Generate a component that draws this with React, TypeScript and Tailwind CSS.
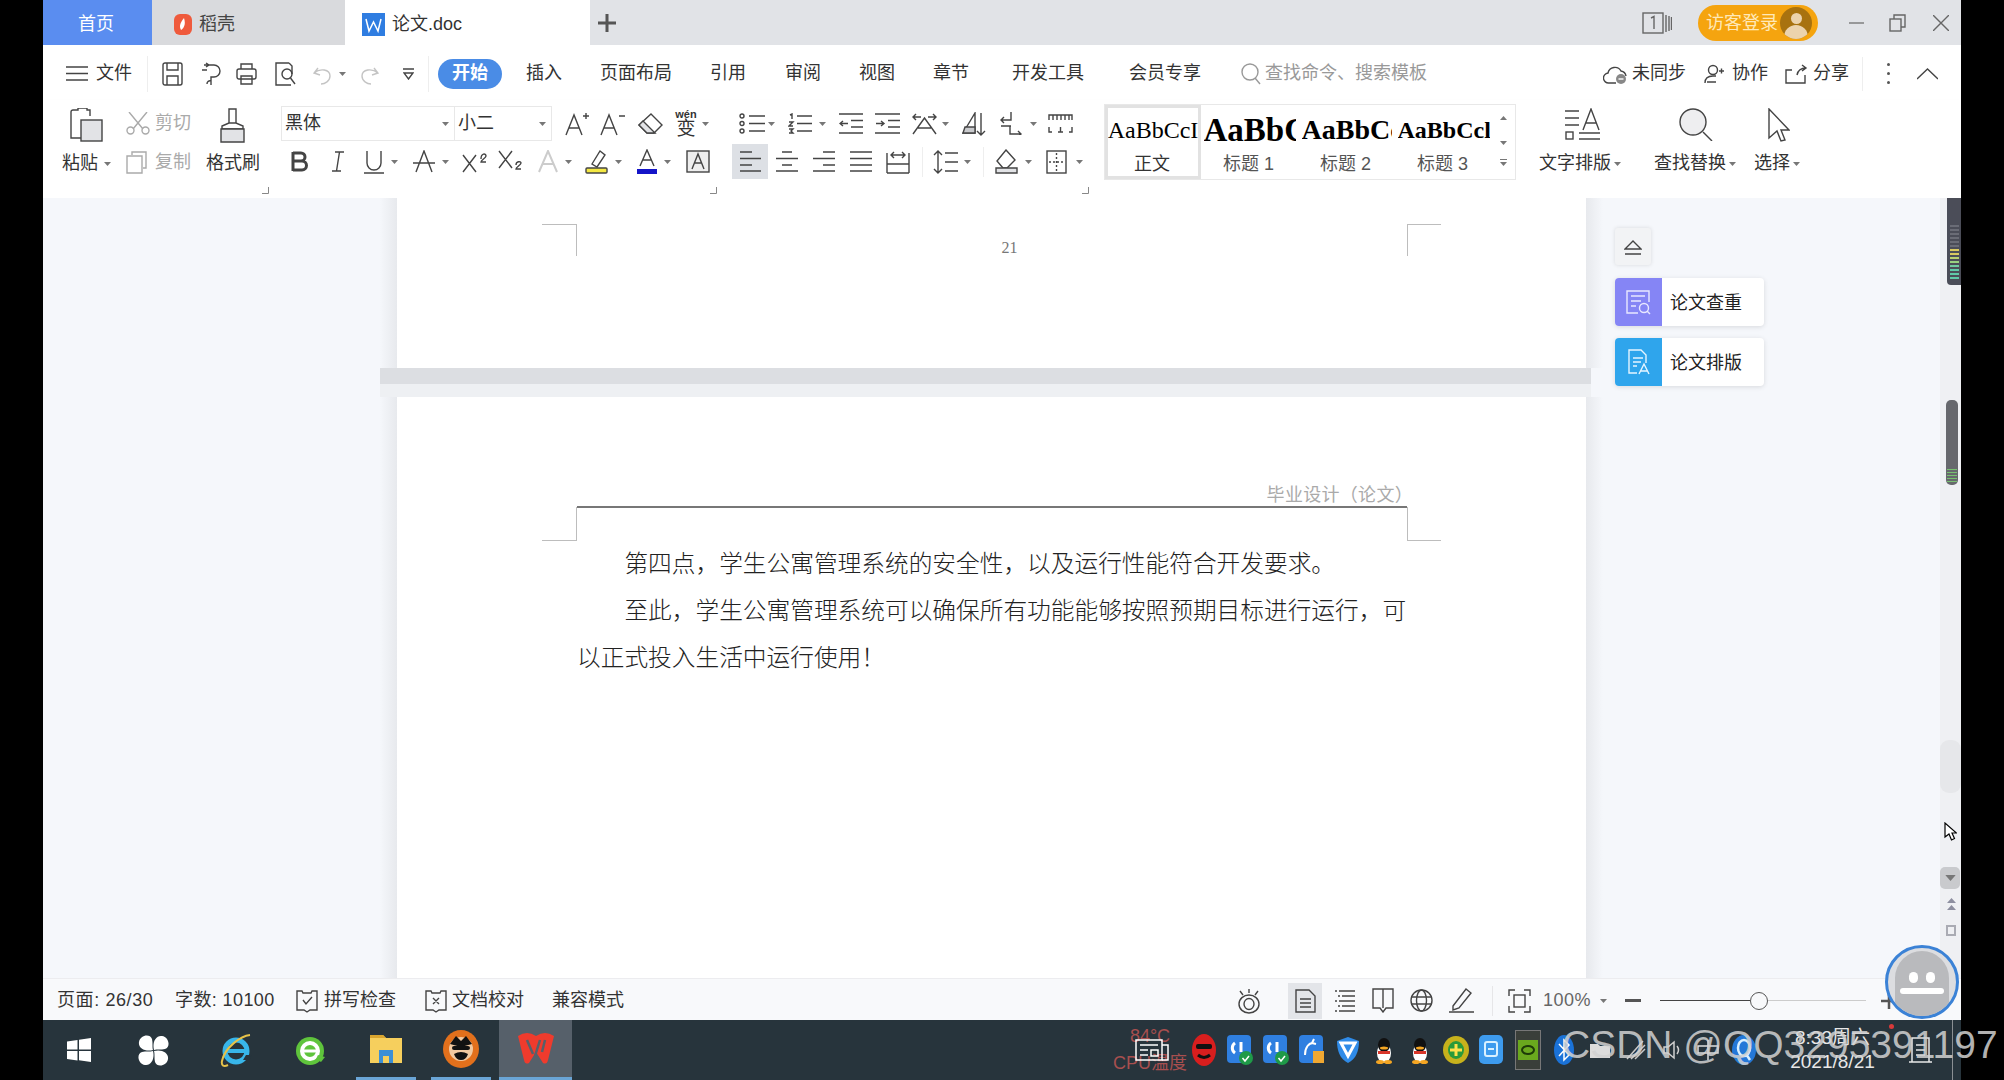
import type { ReactNode } from "react";

type IconProps = { w: number; h: number; className?: string; children: ReactNode; sw?: number };

const S = ({ w, h, className = "", children, sw = 1.4 }: IconProps) => (
  <svg
    width={w}
    height={h}
    viewBox={`0 0 ${w} ${h}`}
    fill="none"
    stroke="currentColor"
    strokeWidth={sw}
    className={`shrink-0 text-[#444] ${className}`}
  >
    {children}
  </svg>
);

const Caret = ({ className = "" }: { className?: string }) => (
  <svg width="7" height="4" viewBox="0 0 7 4" className={`shrink-0 ${className}`}>
    <path d="M0 0h7L3.5 4z" fill="#777" />
  </svg>
);

const Launcher = ({ className = "" }: { className?: string }) => (
  <svg width="7" height="7" viewBox="0 0 7 7" fill="none" stroke="#888" className={`block ${className}`}>
    <path d="M6.5 0v6.5H0" />
  </svg>
);

const tabs = [
  { label: "插入", w: "w-[82px]" },
  { label: "页面布局", w: "w-[102px]" },
  { label: "引用", w: "w-[82px]" },
  { label: "审阅", w: "w-[68px]" },
  { label: "视图", w: "w-[80px]" },
  { label: "章节", w: "w-[68px]" },
  { label: "开发工具", w: "w-[126px]" },
  { label: "会员专享", w: "w-[108px]" },
];

const TabBar = () => (
  <div className="flex h-[45px] items-center bg-[#e1e3e7] text-[18px]">
    <div className="flex h-full w-[109px] items-center justify-center bg-[#5a8df0] pt-[3px] pr-[3px] text-white">首页</div>
    <div className="flex h-full w-[193px] items-center bg-[#d9dadd] pl-[22px] pt-[3px] text-[#444]">
      <svg width="18" height="21" viewBox="0 0 18 21">
        <rect width="18" height="21" rx="6" fill="#ef5a3c" />
        <path d="M10 4C6 9 5 12 7 16c3-2 5-6 3-12z" fill="#fff" />
      </svg>
      <span className="ml-[7px]">稻壳</span>
    </div>
    <div className="flex h-full w-[245px] items-center bg-white pl-[17px] pt-[3px] text-[#333]">
      <svg width="23" height="23" viewBox="0 0 23 23">
        <rect width="23" height="23" fill="#2f7de1" />
        <path d="M4 6l3 12 4.500-9 4.500 9 3-12" fill="none" stroke="#fff" strokeWidth="1.500" />
      </svg>
      <span className="ml-[7px]">论文.doc</span>
    </div>
    <S w={18} h={18} sw={3} className="ml-[8px] text-[#555]">
      <path d="M9 0v18M0 9h18" />
    </S>
    <S w={30} h={22} className="ml-auto text-[#666]">
      <rect x="1" y="1" width="20" height="20" />
      <path d="M24 3v17M27 4v15M29.500 5v13" />
      <path d="M9 6l3-1.500V17" />
    </S>
    <div className="ml-[26px] flex h-[36px] w-[120px] items-center rounded-full bg-[#f5a40f] pl-[8px] text-[18px] text-[#ffe9b8]">
      <span className="pt-[2px]">访客登录</span>
      <div className="ml-[2px] flex h-[32px] w-[32px] flex-col items-center overflow-hidden rounded-full bg-[#a8720f]">
        <div className="mt-[6px] h-[11px] w-[11px] rounded-full bg-[#ecd3ad]" />
        <div className="mt-[1px] h-[14px] w-[24px] rounded-t-full bg-[#ecd3ad]" />
      </div>
    </div>
    <S w={15} h={2} className="ml-[31px] text-[#777]">
      <path d="M0 1h15" />
    </S>
    <S w={17} h={18} className="ml-[25px] text-[#666]">
      <rect x="1" y="5" width="11" height="12" />
      <path d="M5 5V1h11v12h-4" />
    </S>
    <S w={16} h={16} className="ml-[27px] mr-[12px] text-[#666]">
      <path d="M0 0l16 16M16 0L0 16" />
    </S>
  </div>
);

const MenuRow = () => (
  <div className="flex h-[55px] items-center bg-white pt-[2px] text-[18px] text-[#333]">
    <S w={22} h={15} className="ml-[23px]">
      <path d="M0 1h22M0 7.500h22M0 14h22" />
    </S>
    <span className="ml-[8px]">文件</span>
    <div className="ml-[15px] h-[36px] w-px bg-[#eeeeee]" />
    <S w={21} h={24} className="ml-[14px]">
      <path d="M1 3a2 2 0 012-2h15a2 2 0 012 2v18a2 2 0 01-2 2H3a2 2 0 01-2-2z" />
      <path d="M5 1v7h11V1M5 23v-9h11v9" />
    </S>
    <S w={21} h={24} className="ml-[17px]">
      <path d="M8 3h6a6 6 0 010 12h-3v8M4 3h5M6 1l3 2-3 2M2 8h5M11 19a3 3 0 00-4 3" />
    </S>
    <S w={21} h={24} className="ml-[15px]">
      <rect x="1" y="7" width="19" height="10" rx="2" />
      <path d="M5 7V2h11v5M5 14h11v8H5z" />
    </S>
    <S w={22} h={24} className="ml-[17px]">
      <path d="M15 1H2v22h15M15 1l3 3v8" />
      <circle cx="13" cy="12" r="5" />
      <path d="M16.500 16l4.500 6" />
    </S>
    <S w={19} h={22} className="ml-[17px] text-[#c4c4c4]">
      <path d="M5 5L1 10l6 2M1 10c6-5 16-4 16 3 0 5-5 8-9 8" />
    </S>
    <Caret className="ml-[7px]" />
    <S w={18} h={22} className="ml-[15px] text-[#c4c4c4]">
      <path d="M13 5l4 5-6 2M17 10C11 5 1 6 1 13c0 5 5 8 9 8" />
    </S>
    <S w={11} h={12} className="ml-[24px]">
      <path d="M0 1h11M1 5h9L5.500 11z" />
    </S>
    <div className="ml-[14px] h-[36px] w-px bg-[#eeeeee]" />
    <div className="ml-[9px] flex h-[30px] w-[64px] items-center justify-center rounded-full bg-[#4a8ce6] font-bold text-white">
      开始
    </div>
    {tabs.map((t) => (
      <div key={t.label} className={`${t.w} pl-[2px] text-center`}>
        {t.label}
      </div>
    ))}
    <S w={20} h={22} className="ml-[23px] text-[#999]">
      <circle cx="9" cy="9" r="8" />
      <path d="M14 15l5 6" />
    </S>
    <span className="ml-[4px] text-[#999]">查找命令、搜索模板</span>
    <S w={24} h={22} className="ml-[176px]">
      <path d="M13 20H6a5 5 0 01-1-10 7 7 0 0113-2 6 6 0 015 5" />
      <circle cx="18" cy="16" r="5" fill="#888" stroke="none" />
      <path d="M15.500 16h5" stroke="#fff" />
    </S>
    <span className="ml-[5px]">未同步</span>
    <S w={20} h={20} className="ml-[18px]">
      <circle cx="9" cy="6" r="4.500" />
      <path d="M1 19c0-5 3-7 8-7h3M12 18H3M15 7h5M17.500 4.500v5" />
    </S>
    <span className="ml-[8px]">协作</span>
    <S w={25} h={20} className="ml-[16px]">
      <path d="M8 6H2v13h19v-8M13 11c1-5 4-7 9-7M18 1l4 3-4 3" />
    </S>
    <span className="ml-[4px]">分享</span>
    <div className="ml-[13px] h-[34px] w-px bg-[#eeeeee]" />
    <div className="ml-[24px] flex w-[3px] flex-col gap-[6px]">
      <div className="h-[3px] w-[3px] rounded-full bg-[#555]" />
      <div className="h-[3px] w-[3px] rounded-full bg-[#555]" />
      <div className="h-[3px] w-[3px] rounded-full bg-[#555]" />
    </div>
    <S w={21} h={12} className="ml-[27px]">
      <path d="M0 11L10.500 1 21 11" />
    </S>
  </div>
);

const Ribbon = () => (
  <div className="flex h-[98px] items-start bg-white pt-[4px] text-[18px] text-[#333] shadow-[0_2px_3px_rgba(0,0,0,0.08)]">
    <div className="ml-[19px] w-[50px]">
      <div className="h-[39px] pt-[4px]">
        <S w={33} h={34} className="ml-[8px]">
          <path d="M20 8V2h-3V0H8v2H3a2 2 0 00-2 2v26h10" />
          <rect x="11" y="12" width="21" height="21" fill="#e2e3e6" />
        </S>
      </div>
      <div className="flex h-[37px] items-center pt-[4px]">
        粘贴
        <Caret className="ml-[6px]" />
      </div>
    </div>
    <div className="ml-[14px] w-[80px]">
      <div className="flex h-[39px] items-center text-[#aaa]">
        <S w={24} h={23} className="text-[#aaa]">
          <path d="M3 0l14 17M21 0L7 17" />
          <circle cx="4.500" cy="18.500" r="3.500" />
          <circle cx="19.500" cy="18.500" r="3.500" />
        </S>
        <span className="ml-[5px]">剪切</span>
      </div>
      <div className="flex h-[37px] items-center pt-[2px] text-[#aaa]">
        <S w={21} h={23} className="text-[#aaa]">
          <path d="M6 4V1h14v16h-3M1 5h15v17H1z" />
        </S>
        <span className="ml-[8px]">复制</span>
      </div>
    </div>
    <div className="w-[75px]">
      <div className="h-[39px] pt-[4px]">
        <S w={27} h={35} className="ml-[13px]">
          <path d="M10 15V1h7v14M10 15l-7 3v3h21v-3l-7-3z" />
          <path d="M2 21h23v13H2z" fill="#e2e3e6" />
        </S>
      </div>
      <div className="flex h-[37px] items-center pt-[4px]">格式刷</div>
      <Launcher className="ml-[56px] mt-[7px]" />
    </div>

    <div className="w-[451px]">
      <div className="flex h-[39px] items-center">
        <div className="flex h-[35px] w-[173px] items-center border border-r-0 border-[#e8e8e8] pl-[3px]">
          黑体
          <Caret className="ml-auto mr-[5px]" />
        </div>
        <div className="flex h-[35px] w-[98px] items-center border border-[#e8e8e8] pl-[3px]">
          小二
          <Caret className="ml-auto mr-[5px]" />
        </div>
        <S w={24} h={24} className="ml-[13px]">
          <path d="M1 23L9 3l8 20M4 16h10M18 4h6M21 1v6" />
        </S>
        <S w={25} h={24} className="ml-[11px]">
          <path d="M1 23L9 3l8 20M4 16h10M19 4h6" />
        </S>
        <S w={25} h={22} className="ml-[13px]">
          <path d="M13 1l11 11-8 8H9l-8-8z" />
          <path d="M1 12l4-4 12 12H9z" fill="#e2e3e6" />
        </S>
        <div className="ml-[11px] flex w-[24px] flex-col items-center text-[#333]">
          <span className="h-[10px] text-[11px] font-bold leading-[10px]">wén</span>
          <span className="text-[19px] leading-[19px]">变</span>
        </div>
        <Caret className="ml-[4px]" />
      </div>
      <div className="flex h-[37px] items-center">
        <S w={18} h={21} sw={3} className="ml-[10px] text-[#333]">
          <path d="M2 1v19M2 2h8a4 4 0 010 8H2h9a4.500 4.500 0 010 9H2" />
        </S>
        <S w={12} h={21} className="ml-[23px]">
          <path d="M3 1h9M0 20h9M7.500 1l-3 19" />
        </S>
        <S w={20} h={24} className="ml-[20px]">
          <path d="M3 1v12a7 7 0 0014 0V1M0 23h20" />
        </S>
        <Caret className="ml-[7px]" />
        <S w={22} h={23} className="ml-[15px]">
          <path d="M3 22L11 1l8 21M0 13h22" />
        </S>
        <Caret className="ml-[7px]" />
        <S w={25} h={23} className="ml-[13px]">
          <path d="M1 5l13 17M14 5L1 22M19 9c0-6 5-6 5-3 0 2-5 4-5 6h5" />
        </S>
        <S w={24} h={23} className="ml-[11px]">
          <path d="M1 1l13 17M14 1L1 18M18 15c0-4 5-4 5-2 0 2-5 4-5 6h5" />
        </S>
        <S w={20} h={23} sw={2} className="ml-[16px] text-[#ccc]">
          <path d="M1 22L10 1l9 21M5 14h10" />
        </S>
        <Caret className="ml-[7px]" />
        <S w={23} h={25} className="ml-[13px]">
          <path d="M7 15L15 2l5 4-8 12z" />
          <rect x="1" y="19" width="21" height="5" rx="1" fill="#f4e842" />
        </S>
        <Caret className="ml-[7px]" />
        <S w={20} h={25} className="ml-[15px]">
          <path d="M3 17L10 1l7 16M6 11h8" />
          <rect x="0" y="20" width="20" height="5" fill="#1414c8" stroke="none" />
        </S>
        <Caret className="ml-[7px]" />
        <S w={24} h={23} className="ml-[15px]">
          <rect x="1" y="1" width="22" height="21" fill="#eeeeee" />
          <path d="M6 19l6-15 6 15M8 13h8" />
        </S>
      </div>
      <Launcher className="ml-[429px] mt-[7px]" />
    </div>

    <div className="w-[372px]">
      <div className="flex h-[39px] items-center">
        <S w={26} h={21} className="ml-[7px]">
          <circle cx="3" cy="3" r="2" />
          <circle cx="3" cy="10.500" r="2" />
          <circle cx="3" cy="18" r="2" />
          <path d="M10 3h16M10 10.500h16M10 18h16" />
        </S>
        <Caret className="ml-[3px]" />
        <S w={24} h={21} className="ml-[13px]">
          <path d="M2 2l2-1v5M1 9h4L1 13h4M1 16h4l-2 2 2 2H1M9 3h15M9 10.500h15M9 18h15" />
        </S>
        <Caret className="ml-[7px]" />
        <S w={24} h={21} className="ml-[13px]">
          <path d="M0 1h24M12 7.500h12M12 14h12M0 20h24M9 10.500H1M4 8l-3 2.500L4 13" />
        </S>
        <S w={25} h={21} className="ml-[12px]">
          <path d="M0 1h25M13 7.500h12M13 14h12M0 20h25M1 10.500h8M6 8l3 2.500L6 13" />
        </S>
        <S w={25} h={23} className="ml-[12px]">
          <path d="M1 22L12.500 6 24 22M6 16h13M1 5h8M4 2L1 5l3 3M24 5h-8M21 2l3 3-3 3" />
        </S>
        <Caret className="ml-[5px]" />
        <S w={24} h={24} className="ml-[13px]">
          <path d="M1 21L13 1v20z" />
          <path d="M3 15h10v6H1z" fill="#c9cacd" />
          <path d="M19 1v22M15 19l4 4 4-4" />
        </S>
        <S w={22} h={23} className="ml-[14px]">
          <path d="M11 0v8H1M4 5L1 8l3 3M10 14v8h11M18 19l3 3-3 3M11 14H1" />
        </S>
        <Caret className="ml-[8px]" />
        <S w={25} h={19} className="ml-[11px]">
          <path d="M1 6V1h23v5M5 1v5M9 1v5M13 1v5M17 1v5M21 1v5M1 13v5h3M21 18h3v-5M12.500 13v5M10 18h5" />
        </S>
      </div>
      <div className="flex h-[37px] items-center">
        <div className="flex h-[35px] w-[36px] items-center justify-center bg-[#dde0e5]">
          <S w={21} h={21}>
            <path d="M0 1h12M0 7.500h21M0 14h12M0 20h21" />
          </S>
        </div>
        <S w={22} h={21} className="ml-[8px]">
          <path d="M6 1h10M0 7.500h22M6 14h10M0 20h22" />
        </S>
        <S w={22} h={21} className="ml-[15px]">
          <path d="M10 1h12M0 7.500h22M10 14h12M0 20h22" />
        </S>
        <S w={22} h={21} className="ml-[15px]">
          <path d="M0 1h22M0 7.500h22M0 14h22M0 20h22" />
        </S>
        <S w={24} h={24} className="ml-[14px]">
          <path d="M1 3v20M23 3v20M1 23h22M1 14h22M5 5h14M8 2L5 5l3 3M16 2l3 3-3 3" />
        </S>
        <div className="ml-[12px] h-[30px] w-px bg-[#eeeeee]" />
        <S w={25} h={24} className="ml-[10px]">
          <path d="M5 1v22M1 5l4-4 4 4M1 19l4 4 4-4M12 3h13M12 12h13M12 21h13" />
        </S>
        <Caret className="ml-[6px]" />
        <div className="ml-[12px] h-[30px] w-px bg-[#eeeeee]" />
        <S w={23} h={25} className="ml-[11px]">
          <path d="M11 1l9 10-8 8H8l-6-7z" />
          <path d="M1 19h21v5H1z" fill="#e2e3e6" />
        </S>
        <Caret className="ml-[7px]" />
        <S w={21} h={24} className="ml-[14px]">
          <rect x="1" y="1" width="19" height="22" />
          <path d="M10.500 3v18M3 12h15" strokeDasharray="2 2" />
        </S>
        <Caret className="ml-[9px]" />
      </div>
      <Launcher className="ml-[350px] mt-[7px]" />
    </div>

    <div className="flex h-[76px] w-[412px] border border-[#e8e8e8]">
      <div className="flex w-[96px] flex-col items-center overflow-hidden border-[3px] border-[#e2e2e2]">
        <div className="h-[44px] whitespace-nowrap font-['Liberation_Serif',serif] text-[24px] leading-[44px] text-black">
          AaBbCcI
        </div>
        <div className="pr-[2px] leading-[24px]">正文</div>
      </div>
      <div className="flex w-[97px] flex-col items-center overflow-hidden pt-[3px] text-[#555]">
        <div className="h-[44px] w-[92px] overflow-hidden whitespace-nowrap font-['Liberation_Serif',serif] text-[33px] font-bold leading-[44px] text-black">
          AaBbCcDd
        </div>
        <div className="pr-[2px] leading-[24px]">标题 1</div>
      </div>
      <div className="flex w-[97px] flex-col items-center overflow-hidden pt-[3px] text-[#555]">
        <div className="h-[44px] w-[90px] overflow-hidden whitespace-nowrap font-['Liberation_Serif',serif] text-[28px] font-bold leading-[44px] text-black">
          AaBbCcDd
        </div>
        <div className="pr-[2px] leading-[24px]">标题 2</div>
      </div>
      <div className="flex w-[97px] flex-col items-center overflow-hidden pt-[3px] text-[#555]">
        <div className="h-[44px] w-[92px] overflow-hidden whitespace-nowrap font-['Liberation_Serif',serif] text-[24px] font-bold leading-[44px] text-black">
          AaBbCcl
        </div>
        <div className="pr-[2px] leading-[24px]">标题 3</div>
      </div>
      <div className="flex flex-1 flex-col items-center pt-[11px]">
        <Caret className="rotate-180" />
        <Caret className="mt-[21px]" />
        <div className="mt-[14px] h-px w-[7px] bg-[#777]" />
        <Caret className="mt-[2px]" />
      </div>
    </div>

    <div className="ml-[23px] w-[85px]">
      <div className="h-[39px] pt-[4px]">
        <S w={35} h={33} className="ml-[26px]">
          <path d="M0 3h14M0 10h14M0 17h14M18 22L26 1l8 21M21 15h10M14 25h21M14 31h21" />
          <rect x="1" y="24" width="7" height="7" />
        </S>
      </div>
      <div className="flex h-[37px] items-center whitespace-nowrap pt-[4px]">
        文字排版
        <Caret className="ml-[3px]" />
      </div>
    </div>
    <div className="ml-[30px] w-[85px]">
      <div className="h-[39px] pt-[4px]">
        <S w={34} h={33} className="ml-[25px]">
          <circle cx="14" cy="14" r="13" fill="#eeeef0" />
          <path d="M24 24l9 9" />
        </S>
      </div>
      <div className="flex h-[37px] items-center whitespace-nowrap pt-[4px]">
        查找替换
        <Caret className="ml-[3px]" />
      </div>
    </div>
    <div className="ml-[15px] w-[50px]">
      <div className="h-[39px] pt-[4px]">
        <S w={22} h={34} className="ml-[14px]">
          <path d="M1 1l20 21h-8l4 10-4 1-4-10-8 7z" />
        </S>
      </div>
      <div className="flex h-[37px] items-center whitespace-nowrap pt-[4px]">
        选择
        <Caret className="ml-[3px]" />
      </div>
    </div>
  </div>
);

const LeftStrip = () => <div className="w-[17px] bg-linear-to-r from-[#f5f7fb] to-[#e7e9ed]" />;
const RightStrip = () => <div className="w-[17px] bg-linear-to-r from-[#e7e9ed] to-[#f5f7fb]" />;

const FloatCard = ({ label, color, children }: { label: string; color: string; children: ReactNode }) => (
  <div className="flex h-[48px] w-[149px] items-center rounded-[4px] bg-white shadow-[0_1px_5px_rgba(0,0,0,0.12)]">
    <div className={`flex h-full w-[47px] items-center justify-center rounded-l-[4px] ${color}`}>{children}</div>
    <span className="ml-[8px] pt-[2px] text-[18px] text-[#222]">{label}</span>
  </div>
);

const Doc = () => (
  <div className="flex h-[780px] bg-[#f5f7fb]">
    <div className="w-[337px]" />
    <div className="flex w-[1223px] flex-col">
      <div className="flex h-[170px]">
        <LeftStrip />
        <div className="flex w-[1189px] items-start bg-white px-[145px] pt-[26px]">
          <div className="h-[32px] w-[35px] border-r border-t border-[#bdbdbd]" />
          <div className="flex-1 pl-[35px] pt-[12px] text-center font-['Liberation_Serif',serif] text-[16px] text-[#777]">
            21
          </div>
          <div className="h-[32px] w-[34px] border-l border-t border-[#bdbdbd]" />
        </div>
        <RightStrip />
      </div>
      <div className="mr-[12px] h-[16px] bg-[#dcdee2]" />
      <div className="mr-[12px] h-[13px] bg-[#eef0f3]" />
      <div className="flex flex-1">
        <LeftStrip />
        <div className="flex w-[1189px] bg-white px-[145px]">
          <div className="w-[35px] pt-[110px]">
            <div className="h-[34px] border-b border-r border-[#bdbdbd]" />
          </div>
          <div className="flex-1">
            <div className="flex h-[111px] items-end justify-end border-b-2 border-[#777] pl-[10px] text-[18px] leading-[22px] text-[#aaa]">
              <span className="-mr-[6px] tracking-[0.3px]">毕业设计（论文）</span>
            </div>
            <div className="pt-[33px] font-light text-[23.7px] leading-[47px] text-[#222]">
              <p className="indent-[47.4px]">第四点，学生公寓管理系统的安全性，以及运行性能符合开发要求。</p>
              <p className="indent-[47.4px]">至此，学生公寓管理系统可以确保所有功能能够按照预期目标进行运行，可以正式投入生活中运行使用！</p>
            </div>
          </div>
          <div className="w-[34px] pt-[110px]">
            <div className="h-[34px] border-b border-l border-[#bdbdbd]" />
          </div>
        </div>
        <RightStrip />
      </div>
    </div>
    <div className="w-[337px] pl-[12px] pt-[30px]">
      <div className="flex h-[37px] w-[36px] items-center justify-center rounded-[3px] bg-[#f2f3f5] shadow-[0_0_4px_rgba(0,0,0,0.12)]">
        <S w={18} h={18}>
          <path d="M1 11L9 3l8 8zM1 16h16" />
        </S>
      </div>
      <div className="mt-[13px] flex flex-col gap-[12px]">
        <FloatCard label="论文查重" color="bg-[#8585f5]">
          <S w={25} h={25} className="text-[#e8e8ff]">
            <path d="M23 12V1H1v22h11M5 6h14M5 11h10M5 16h5" />
            <circle cx="18" cy="18" r="4.500" />
            <path d="M21 21l3 3" />
          </S>
        </FloatCard>
        <FloatCard label="论文排版" color="bg-[#2fa5ec]">
          <S w={24} h={26} className="text-[#e6f5ff]">
            <path d="M10 24H2V1h12l5 5v8M6 9h10M6 13h8M6 17h4M12 25l5-10 5 10M14 22h6" />
          </S>
        </FloatCard>
      </div>
    </div>
    <div className="relative w-[21px] bg-[#eff0f3]">
      <div className="ml-[7px] flex h-[87px] w-[14px] flex-col justify-end gap-[2px] rounded-bl-[4px] bg-[#4b4d58] pb-[6px] pl-[3px] pr-[2px]">
        <div className="h-[2px] bg-[#6a6c76]" />
        <div className="h-[2px] bg-[#6a6c76]" />
        <div className="h-[2px] bg-[#6a6c76]" />
        <div className="h-[2px] bg-[#6a6c76]" />
        <div className="h-[2px] bg-[#6a6c76]" />
        <div className="h-[2px] bg-[#6a6c76]" />
        <div className="h-[2px] bg-[#d8c860]" />
        <div className="h-[2px] bg-[#d8c860]" />
        <div className="h-[2px] bg-[#b8d070]" />
        <div className="h-[2px] bg-[#98d080]" />
        <div className="h-[2px] bg-[#70c8a0]" />
        <div className="h-[2px] bg-[#60c8a8]" />
        <div className="h-[2px] bg-[#60c8a8]" />
        <div className="h-[2px] bg-[#60c8a8]" />
      </div>
      <div className="ml-[6px] mt-[115px] flex h-[85px] w-[12px] flex-col justify-end gap-[2px] rounded-[5px] bg-[#67686d] px-[1px] pb-[3px]">
        <div className="h-px bg-[#78c070]" />
        <div className="h-px bg-[#78c070]" />
        <div className="h-px bg-[#78c070]" />
        <div className="h-px bg-[#78c070]" />
        <div className="h-px bg-[#78c070]" />
      </div>
      <div className="mt-[255px] h-[53px] rounded-[9px] bg-[#e6e7ea]" />
      <svg width="13" height="19" viewBox="0 0 13 19" className="ml-[4px] mt-[29px] block">
        <path d="M1 1v14l4-3 2.500 6 3-1.500L8 11h4.500z" fill="#fff" stroke="#000" strokeWidth="1.200" />
      </svg>
      <div className="mt-[26px] flex h-[22px] w-[20px] items-center justify-center rounded-[5px] bg-[#c9cacd]">
        <Caret className="scale-150" />
      </div>
      <div className="ml-[7px] mt-[9px] flex flex-col">
        <svg width="9" height="12" viewBox="0 0 9 12">
          <path d="M0 5l4.500-5L9 5zM0 12l4.500-5L9 12z" fill="#8e8fa0" />
        </svg>
      </div>
      <div className="ml-[6px] mt-[15px] h-[11px] w-[10px] border-2 border-[#aaabb3]" />
    </div>
  </div>
);

const StatusBar = () => (
  <div className="flex h-[42px] items-center border-t border-[#ececef] bg-[#f8f9fb] pt-[2px] text-[18px] text-[#333]">
    <span className="ml-[14px] w-[118px] whitespace-nowrap tracking-[0.6px]">页面: 26/30</span>
    <span className="w-[121px] whitespace-nowrap tracking-[0.4px]">字数: 10100</span>
    <S w={22} h={24}>
      <path d="M1 2h5l1 2h8l1-2h5v19h-7l-3 2-3-2H1zM7 11l3 4 6-7" />
    </S>
    <span className="ml-[6px]">拼写检查</span>
    <S w={22} h={24} className="ml-[29px]">
      <path d="M1 2h5l1 2h8l1-2h5v19h-7l-3 2-3-2H1zM8 9l6 6M14 9l-6 6" />
    </S>
    <span className="ml-[5px]">文档校对</span>
    <span className="ml-[28px]">兼容模式</span>
    <S w={24} h={26} className="ml-[613px]">
      <ellipse cx="12" cy="16" rx="10" ry="9" />
      <ellipse cx="12" cy="16" rx="5" ry="5.500" />
      <path d="M12 1v4M3 3l3 4M21 3l-3 4" />
    </S>
    <div className="ml-[27px] flex h-[36px] w-[34px] items-center justify-center bg-[#e3e5e9]">
      <S w={21} h={24} className="text-[#333]">
        <path d="M1 1h13l6 6v16H1zM5 10h11M5 14h11M5 18h11" />
      </S>
    </div>
    <S w={20} h={22} className="ml-[13px]">
      <path d="M4 1h16M7 6h13M4 11h16M7 16h13M4 21h16" strokeDasharray="14 0" />
      <path d="M0 1h2M3 6h2M0 11h2M3 16h2M0 21h2" />
    </S>
    <S w={22} h={25} className="ml-[17px] text-[#333]">
      <path d="M1 1h20v19h-7l-3 4-3-4H1zM11 1v19" />
    </S>
    <S w={23} h={23} className="ml-[16px]">
      <circle cx="11.500" cy="11.500" r="10.500" />
      <ellipse cx="11.500" cy="11.500" rx="5" ry="10.500" />
      <path d="M1 8h21M1 15h21" />
    </S>
    <S w={25} h={25} className="ml-[16px]">
      <path d="M4 18L17 1l5 4-12 15-6 2zM0 24h25" />
    </S>
    <div className="ml-[18px] h-[30px] w-px bg-[#e6e6e8]" />
    <S w={23} h={24} className="ml-[15px]">
      <path d="M1 7V1h6M16 1h6v6M1 17v6h6M22 17v6h-6" />
      <rect x="6" y="6" width="11" height="12" />
    </S>
    <span className="ml-[12px] w-[48px] tracking-[0.5px] text-[#666]">100%</span>
    <Caret className="ml-[9px]" />
    <div className="ml-[18px] h-[3px] w-[16px] bg-[#555]" />
    <div className="ml-[19px] flex w-[206px] items-center">
      <div className="h-px w-[90px] bg-[#444]" />
      <div className="h-[18px] w-[18px] rounded-full border border-[#555] bg-[#f8f9fb]" />
      <div className="h-px flex-1 bg-[#ccc]" />
    </div>
    <S w={16} h={16} sw={2.500} className="ml-[15px] text-[#555]">
      <path d="M8 0v16M0 8h16" />
    </S>
  </div>
);

const QQ = () => (
  <svg width="20" height="27" viewBox="0 0 20 27">
    <ellipse cx="10" cy="16" rx="7" ry="10" fill="#fff" />
    <ellipse cx="10" cy="8" rx="6" ry="7" fill="#111" />
    <ellipse cx="10" cy="11" rx="4" ry="1.500" fill="#f5a623" />
    <path d="M4 14h12v3H4z" fill="#d8362a" />
    <ellipse cx="6" cy="25" rx="4" ry="2" fill="#f5a623" />
    <ellipse cx="14" cy="25" rx="4" ry="2" fill="#f5a623" />
  </svg>
);

const Cloud = () => (
  <svg width="26" height="30" viewBox="0 0 26 30">
    <rect width="24" height="28" rx="4" fill="#2f7fe0" />
    <path d="M8 8a6 6 0 0 0 0 10" fill="none" stroke="#fff" strokeWidth="3" />
    <path d="M14 7v10" stroke="#fff" strokeWidth="3" />
    <circle cx="19" cy="23" r="7" fill="#1f9a48" />
    <path d="M15.500 23l2.500 3 4-5" fill="none" stroke="#fff" strokeWidth="1.500" />
  </svg>
);

const trayIcons: ReactNode[] = [
  <svg width="26" height="34" viewBox="0 0 26 34">
    <ellipse cx="13" cy="17" rx="12" ry="16" fill="#d81e1e" />
    <rect x="5" y="11" width="16" height="5" rx="2" fill="#111" />
    <path d="M7 22q6 5 12 0" stroke="#111" strokeWidth="3" fill="none" />
  </svg>,
  <Cloud />,
  <Cloud />,
  <svg width="26" height="30" viewBox="0 0 26 30">
    <rect width="24" height="28" rx="4" fill="#2f7fe0" />
    <path d="M6 20c0-8 4-12 8-12M15 4l-2 4 4 1" fill="none" stroke="#fff" strokeWidth="2" />
    <rect x="14" y="16" width="11" height="12" fill="#f0a832" />
  </svg>,
  <svg width="24" height="28" viewBox="0 0 24 28">
    <path d="M12 1l11 4c0 10-3 18-11 22C4 23 1 15 1 5z" fill="#2f8be8" />
    <path d="M5 7h14l-7 13z" fill="none" stroke="#fff" strokeWidth="3" />
  </svg>,
  <QQ />,
  <QQ />,
  <svg width="28" height="30" viewBox="0 0 28 30">
    <ellipse cx="14" cy="15" rx="13" ry="14" fill="#c7b21c" />
    <ellipse cx="14" cy="15" rx="8" ry="9" fill="#2a9a3a" />
    <path d="M14 9v12M8 15h12" stroke="#ffe14a" strokeWidth="3" />
  </svg>,
  <svg width="26" height="30" viewBox="0 0 26 30">
    <rect width="24" height="29" rx="5" fill="#3d9bee" />
    <rect x="6" y="7" width="12" height="14" rx="2" fill="none" stroke="#d8f0ff" strokeWidth="2" />
    <path d="M9 14h6" stroke="#d8f0ff" strokeWidth="2" />
  </svg>,
  <svg width="26" height="40" viewBox="0 0 26 40">
    <rect x="0.500" y="0.500" width="25" height="39" fill="#3a3f3a" stroke="#777" />
    <rect x="3" y="10" width="20" height="20" fill="#6aa81e" />
    <ellipse cx="13" cy="20" rx="6" ry="4" fill="none" stroke="#1d3a08" strokeWidth="2" />
  </svg>,
  <svg width="22" height="32" viewBox="0 0 22 32">
    <ellipse cx="11" cy="16" rx="10" ry="15" fill="#1a72d8" />
    <path d="M6 10l10 11-5 5V6l5 5-10 11" fill="none" stroke="#fff" strokeWidth="1.500" />
  </svg>,
  <svg width="22" height="18" viewBox="0 0 22 18">
    <path d="M1 3h8l2 2h10v12H1z" fill="#dcdcdc" />
  </svg>,
  <svg width="22" height="22" viewBox="0 0 22 22" fill="none" stroke="#c9c9c9" strokeWidth="1.500">
    <path d="M2 20L18 2M6 20L20 6M10 20L20 10" />
  </svg>,
  <svg width="20" height="22" viewBox="0 0 20 22" fill="none" stroke="#d0d0d0" strokeWidth="1.500">
    <path d="M2 8v6h4l6 5V3L6 8zM15 7q3 4 0 8" />
  </svg>,
  <svg width="22" height="22" viewBox="0 0 22 22" fill="none" stroke="#e0e0e0" strokeWidth="1.500">
    <path d="M1 7h20v7H1zM11 1v20" />
  </svg>,
  <svg width="26" height="32" viewBox="0 0 26 32">
    <ellipse cx="13" cy="16" rx="12" ry="15" fill="#2478d8" />
    <ellipse cx="13" cy="14" rx="6" ry="8" fill="none" stroke="#d8efff" strokeWidth="2.500" />
    <path d="M15 20l4 6" stroke="#d8efff" strokeWidth="2.500" />
  </svg>,
];

const Taskbar = () => (
  <div className="flex h-[60px] items-center bg-[#27343c]">
    <svg width="24" height="24" viewBox="0 0 24 24" className="ml-[24px] shrink-0">
      <path d="M0 3.500l10.500-1.500v9.500H0zM12 1.800L24 0v11.500H12zM0 13h10.500v9.500L0 21zM12 13h12v11l-12-1.800z" fill="#fff" />
    </svg>
    <svg width="33" height="33" viewBox="0 0 33 33" className="ml-[46px] shrink-0">
      <path d="M16 16C8 18 1 14 2 8 3 1 13-1 15 5c1 4 0 8 1 11zM17 16C15 8 19 1 25 2c7 1 9 11 3 13-4 1-8 0-11 1zM17 17c8-2 15 2 14 8-1 7-11 9-13 3-1-4 0-8-1-11zM16 17c2 8-2 15-8 14-7-1-9-11-3-13 4-1 8 0 11-1z" fill="#fff" />
    </svg>
    <svg width="33" height="34" viewBox="0 0 33 34" className="ml-[49px] shrink-0">
      <circle cx="17" cy="18" r="11" fill="none" stroke="#38b6ea" strokeWidth="5" />
      <path d="M8 18h19" stroke="#38b6ea" strokeWidth="4" />
      <path d="M27 22h6l-3 5H24z" fill="#27343c" />
      <path d="M31 2C22 3 6 14 3 28c-1 5 2 6 6 4" fill="none" stroke="#e6c24a" strokeWidth="2" />
    </svg>
    <svg width="31" height="34" viewBox="0 0 31 34" className="ml-[43px] shrink-0">
      <circle cx="15" cy="18" r="14" fill="#5fc43c" />
      <circle cx="15" cy="18" r="8" fill="none" stroke="#fff" strokeWidth="4" />
      <path d="M7 18h16" stroke="#fff" strokeWidth="3" />
      <path d="M23 22l7 2-4 5-5-3z" fill="#5fc43c" />
    </svg>
    <div className="ml-[30px] flex h-full w-[60px] items-center justify-center border-b-[3px] border-[#6aa5d6]">
      <svg width="32" height="32" viewBox="0 0 32 32">
        <path d="M0 2h13l3 3h16v25H0z" fill="#f6cf5d" />
        <path d="M0 2h13l3 3H0z" fill="#d9a52f" />
        <rect x="9" y="17" width="14" height="13" fill="#3c8fd6" />
        <rect x="13" y="23" width="6" height="7" fill="#f6cf5d" />
      </svg>
    </div>
    <div className="ml-[15px] flex h-full w-[60px] items-center justify-center border-b-[3px] border-[#6aa5d6]">
      <svg width="36" height="38" viewBox="0 0 36 38">
        <ellipse cx="18" cy="19" rx="18" ry="19" fill="#e2701c" />
        <circle cx="18" cy="19" r="12" fill="#f2c9a0" />
        <path d="M7 14l6-8 5 5 5-5 6 8-11 3z" fill="#111" />
        <rect x="9" y="16" width="18" height="4" rx="2" fill="#111" />
        <path d="M11 24q7-4 14 0-2 6-7 6t-7-6z" fill="#111" />
      </svg>
    </div>
    <div className="ml-[8px] flex h-full w-[73px] items-center justify-center border-b-[3px] border-[#6aa5d6] bg-[#56606a]">
      <svg width="36" height="34" viewBox="0 0 36 34">
        <path d="M0 4q9-6 18 0 9-6 18 0l-6 24q-1 5-5 3l-7-11-7 11q-4 2-5-3z" fill="#ef3b2d" />
        <path d="M9 8l6 14M22 8l-5 16M27 8l-3 12" stroke="#56606a" strokeWidth="2.500" fill="none" />
      </svg>
    </div>
    <div className="relative ml-[542px] flex h-full w-[72px] flex-col items-center justify-center text-[18px] leading-[27px] text-[#a84f4f]">
      <span>84°C</span>
      <span className="whitespace-nowrap">CPU温度</span>
      <svg width="34" height="22" viewBox="0 0 34 22" fill="none" stroke="#fff" strokeWidth="1.500" className="absolute left-[21px] top-[19px]">
        <rect x="1" y="1" width="26" height="20" />
        <path d="M27 6h6v15H27M5 6h18M5 11h8M5 16h8M16 11h7v6h-7z" />
      </svg>
    </div>
    {trayIcons.map((icon, i) => (
      <div key={i} className="flex w-[36px] items-center justify-center">
        {icon}
      </div>
    ))}
    <div className="ml-[26px] flex w-[89px] flex-col items-center whitespace-nowrap text-[19px] leading-[24px] text-[#e8e8e8]">
      <span>8:33周六</span>
      <span>2021/8/21</span>
    </div>
    <svg width="23" height="26" viewBox="0 0 23 26" fill="none" stroke="#e8e8e8" strokeWidth="1.500" className="ml-[32px] shrink-0">
      <path d="M3 1h17v24H3zM0 25h23M7 8h9M7 13h9M7 18h9" />
    </svg>
    <div className="ml-[20px] h-full w-px bg-[#8a8f93]" />
  </div>
);

export default function App() {
  return (
    <div className="relative flex h-[1080px] w-[2004px] overflow-hidden bg-black font-['Liberation_Sans','Noto_Sans_CJK_SC',sans-serif]">
      <div className="w-[43px]" />
      <div className="flex w-[1918px] flex-col">
        <TabBar />
        <MenuRow />
        <Ribbon />
        <Doc />
        <StatusBar />
        <Taskbar />
      </div>
      <div className="absolute left-[1885px] top-[945px] flex h-[74px] w-[74px] flex-col items-center overflow-hidden rounded-full border-[3px] border-[#3b82d6] bg-[#dcdde0]">
        <div className="mt-[3px] flex h-[68px] w-[54px] flex-col items-center rounded-t-[27px] bg-[#b9babd]">
          <div className="mt-[21px] flex gap-[8px]">
            <div className="h-[11px] w-[9px] rounded-full bg-white" />
            <div className="h-[11px] w-[9px] rounded-full bg-white" />
          </div>
          <div className="mt-[5px] h-[6px] w-[44px] rounded-full bg-white" />
        </div>
      </div>
      <div className="absolute left-[1889px] top-[1024px] h-[5px] w-[5px] rounded-full bg-[#d83a3a]" />
      <div className="absolute left-[1562px] top-[1024px] whitespace-nowrap text-[39px] leading-[42px] text-[#d2d2d2]/85">
        CSDN @QQ3295391197
      </div>
    </div>
  );
}
